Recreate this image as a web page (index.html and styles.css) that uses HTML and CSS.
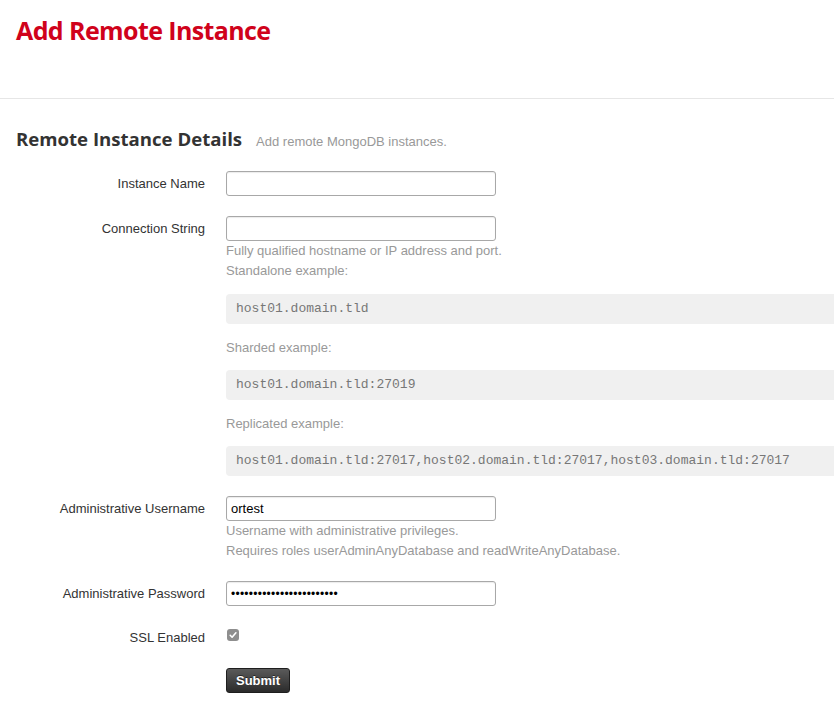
FILE: index.html
```html
<!DOCTYPE html>
<html lang="en">
<head>
<meta charset="utf-8">
<title>Add Remote Instance</title>
<link rel="stylesheet" href="styles.css">
</head>
<body>
<header class="page-header">
  <h1 class="page-title">Add Remote Instance</h1>
</header>
<main class="content">
  <div class="section-head">
    <h2 class="section-title">Remote Instance Details</h2>
    <span class="section-sub">Add remote MongoDB instances.</span>
  </div>
  <form class="form">
    <div class="row">
      <label class="label" for="name">Instance Name</label>
      <div class="control"><input class="field" id="name" type="text"></div>
    </div>
    <div class="row">
      <label class="label" for="conn">Connection String</label>
      <div class="control">
        <input class="field" id="conn" type="text">
        <p class="help">Fully qualified hostname or IP address and port.</p>
        <p class="help">Standalone example:</p>
        <pre class="code">host01.domain.tld</pre>
        <p class="help">Sharded example:</p>
        <pre class="code">host01.domain.tld:27019</pre>
        <p class="help">Replicated example:</p>
        <pre class="code last">host01.domain.tld:27017,host02.domain.tld:27017,host03.domain.tld:27017</pre>
      </div>
    </div>
    <div class="row">
      <label class="label" for="user">Administrative Username</label>
      <div class="control">
        <input class="field" id="user" type="text" value="ortest">
        <p class="help">Username with administrative privileges.</p>
        <p class="help">Requires roles userAdminAnyDatabase and readWriteAnyDatabase.</p>
      </div>
    </div>
    <div class="row">
      <label class="label" for="pass">Administrative Password</label>
      <div class="control"><input class="field pass" id="pass" type="password" value="aaaaaaaaaaaaaaaaaaaaaaaa"></div>
    </div>
    <div class="row row-check">
      <label class="label" for="ssl">SSL Enabled</label>
      <div class="control">
        <span class="checkbox" id="ssl" role="checkbox" aria-checked="true">
          <svg width="12" height="12" viewBox="0 0 12 12"><path d="M3.2 6.3 L5.1 8.2 L8.9 3.8" fill="none" stroke="#fff" stroke-width="1.6" stroke-linecap="round" stroke-linejoin="round"/></svg>
        </span>
      </div>
    </div>
    <div class="row">
      <span class="label"></span>
      <div class="control"><button class="btn" type="button">Submit</button></div>
    </div>
  </form>
</main>
</body>
</html>
```

FILE: styles.css
```css
html, body {
  margin: 0;
  padding: 0;
  overflow: hidden;
  background: #fff;
}
body {
  font-family: "Liberation Sans", Arial, sans-serif;
  font-size: 13px;
  color: #333;
}
.page-header {
  height: 83px;
  padding: 15px 0 0 16px;
  border-bottom: 1px solid #e6e6e6;
}
.page-title {
  margin: 0;
  font-family: "Open Sans", "Liberation Sans", sans-serif;
  font-weight: 700;
  font-size: 25px;
  line-height: 30px;
  color: #d0021b;
  letter-spacing: -0.6px;
}
.content {
  padding: 28px 0 0 16px;
}
.section-head {
  display: flex;
  align-items: baseline;
  gap: 14px;
  margin-bottom: 20px;
}
.section-title {
  margin: 0;
  font-family: "Open Sans", "Liberation Sans", sans-serif;
  font-weight: 700;
  font-size: 18.6px;
  line-height: 24px;
  color: #333;
}
.section-sub {
  color: #999;
  font-size: 13px;
}
.form {
  display: flex;
  flex-direction: column;
  gap: 20px;
}
.row {
  display: grid;
  grid-template-columns: 189px 1fr;
  column-gap: 21px;
  align-items: start;
}
.label {
  text-align: right;
  line-height: 25px;
  color: #333;
}
.control {
  min-width: 0;
}
.field {
  display: block;
  box-sizing: border-box;
  width: 270px;
  height: 25px;
  margin: 0;
  padding: 0 4px;
  border: 1px solid #a8a8a8;
  border-radius: 3px;
  box-shadow: inset 0 1px 1px rgba(0,0,0,0.08);
  font-family: "Liberation Sans", Arial, sans-serif;
  font-size: 13px;
  color: #000;
  background: #fff;
  outline: none;
}
.field.pass {
  font-size: 12px;
  letter-spacing: 0.25px;
}
.help {
  margin: 0;
  line-height: 20px;
  color: #999;
}
.code {
  margin: 13px -20px 14px 0;
  padding: 7px 10px;
  line-height: 16px;
  background: #f0f0f0;
  border-radius: 4px;
  font-family: "Liberation Mono", "Courier New", monospace;
  font-size: 13px;
  color: #777;
  white-space: pre;
  overflow: hidden;
}
.code + .help + .code {
  margin-top: 12px;
}
.code.last {
  margin-bottom: 0;
}
.row-check .label {
  line-height: 24px;
  margin-bottom: -2px;
}
.checkbox {
  display: block;
  width: 12px;
  height: 12px;
  margin: 3px 0 0 1px;
  background: #8e8e8e;
  border-radius: 3px;
}
.checkbox svg {
  display: block;
}
.btn {
  display: block;
  height: 25px;
  padding: 0 9px;
  margin: 0;
  border: 1px solid #1e1e1e;
  border-radius: 3px;
  background: linear-gradient(#5a5a5a, #2b2b2b);
  color: #fff;
  font-family: "Liberation Sans", Arial, sans-serif;
  font-size: 13px;
  font-weight: 700;
  text-shadow: 0 -1px 0 rgba(0,0,0,0.5);
  cursor: pointer;
}
```
